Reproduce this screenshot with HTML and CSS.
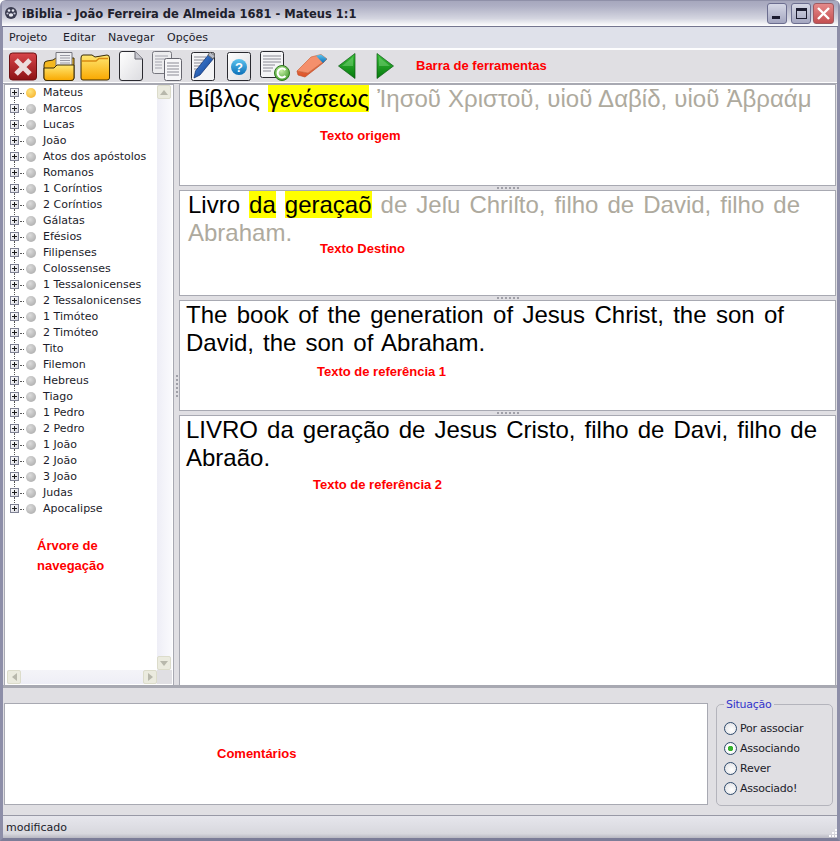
FILE: index.html
```html
<!DOCTYPE html>
<html lang="pt">
<head>
  <meta charset="UTF-8" />
  <title>iBiblia</title>
  <link rel="stylesheet" href="styles.css">
</head>
<body>
  <svg class="defs" width="0" height="0" aria-hidden="true">
    <defs>
      <linearGradient id="gRed" x1="0" y1="0" x2="0" y2="1"><stop offset="0" stop-color="#d8454a"/><stop offset="1" stop-color="#8c1214"/></linearGradient>
      <linearGradient id="gFolder" x1="0" y1="0" x2="0" y2="1"><stop offset="0" stop-color="#ffe873"/><stop offset="1" stop-color="#f9a800"/></linearGradient>
      <linearGradient id="gPage" x1="0" y1="0" x2="1" y2="1"><stop offset="0" stop-color="#ffffff"/><stop offset="1" stop-color="#dcdce0"/></linearGradient>
      <linearGradient id="gBlue" x1="0" y1="0" x2="0" y2="1"><stop offset="0" stop-color="#5ec4ee"/><stop offset="1" stop-color="#0b6fb8"/></linearGradient>
      <linearGradient id="gPen" x1="0" y1="0" x2="1" y2="1"><stop offset="0" stop-color="#4a8be0"/><stop offset="1" stop-color="#0c3a8c"/></linearGradient>
      <linearGradient id="gGreen" x1="0" y1="0" x2="0" y2="1"><stop offset="0" stop-color="#3cc03c"/><stop offset="1" stop-color="#047a0c"/></linearGradient>
      <linearGradient id="gEraser" x1="0" y1="0" x2="0" y2="1"><stop offset="0" stop-color="#f08058"/><stop offset="1" stop-color="#dc5228"/></linearGradient>
      <radialGradient id="gBall" cx="0.45" cy="0.35" r="0.7"><stop offset="0" stop-color="#c8f0a8"/><stop offset="1" stop-color="#3e9a28"/></radialGradient>
    </defs>
  </svg>

  <div class="window">
    <header class="titlebar">
      <svg class="app-icon" width="14" height="14" viewBox="0 0 14 14">
        <circle cx="7" cy="7" r="6" fill="#3a3c50"/>
        <circle cx="5" cy="4.5" r="1.3" fill="#e8e8f0"/>
        <circle cx="9" cy="4.5" r="1.3" fill="#e8e8f0"/>
        <circle cx="3.5" cy="7.5" r="1.1" fill="#c8c8d8"/>
        <circle cx="10.5" cy="7.5" r="1.1" fill="#c8c8d8"/>
        <ellipse cx="7" cy="9" rx="2.2" ry="1.8" fill="#e8e8f0"/>
      </svg>
      <span class="title">iBiblia - João Ferreira de Almeida 1681 - Mateus 1:1</span>
      <div class="win-buttons">
        <span class="win-btn"><span class="glyph-min"></span></span>
        <span class="win-btn"><span class="glyph-max"></span></span>
        <span class="win-btn win-close">
          <svg width="15" height="15" viewBox="0 0 15 15"><path d="M2 2 L13 13 M13 2 L2 13" stroke="#fff" stroke-width="2.4"/></svg>
        </span>
      </div>
    </header>

    <nav class="menubar">
      <span>Projeto</span>
      <span>Editar</span>
      <span>Navegar</span>
      <span>Opções</span>
    </nav>

    <div class="toolbar">
      <svg class="tool" width="28" height="29" viewBox="0 0 28 29">
        <rect x="0.5" y="1" width="27" height="27" rx="3" fill="url(#gRed)" stroke="#6d1012"/>
        <path d="M7 8 L21 22 M21 8 L7 22" stroke="#ecdcdc" stroke-width="5"/>
      </svg>
      <svg class="tool gap-6" width="32" height="29" viewBox="0 0 32 29">
        <path d="M1 13 Q1 9 4 9 L10 8 L13 6 L31 6 L31 26 Q31 28.5 28 28.5 L4 28.5 Q1 28.5 1 26 Z" fill="#f4b820" stroke="#3a2c08"/>
        <path d="M13 0.5 L29 0.5 L29 14 L13 14 Z" fill="#eeeef0" stroke="#77777f"/>
        <path d="M17 3.5 H27 M17 6 H27 M17 8.5 H27 M17 11 H27" stroke="#9a9aa4"/>
        <path d="M1 16 L11 16 L14 13 L31 13 L31 26 Q31 28.5 28 28.5 L4 28.5 Q1 28.5 1 26 Z" fill="url(#gFolder)" stroke="#3a2c08"/>
      </svg>
      <svg class="tool gap-5" width="30" height="29" viewBox="0 0 30 29">
        <path d="M1 6 Q1 3 3 3 L12 3 L15 5 L27 3 Q29.5 3 29.5 6 L29.5 26 Q29.5 28 27 28 L3 28 Q1 28 1 26 Z" fill="url(#gFolder)" stroke="#3a2c08"/>
        <path d="M2 9 L16 9 L19 6.5 L28 6.5" stroke="#d98a10" fill="none" stroke-width="1.5"/>
      </svg>
      <svg class="tool gap-9" width="24" height="30" viewBox="0 0 24 30">
        <path d="M3 0.5 L16 0.5 L23.5 8 L23.5 27 Q23.5 29.5 21 29.5 L3 29.5 Q0.5 29.5 0.5 27 L0.5 3 Q0.5 0.5 3 0.5 Z" fill="url(#gPage)" stroke="#2a2a30"/>
        <path d="M16 0.5 L16 8 L23.5 8" fill="#c8c8d0" stroke="#6a6a74"/>
      </svg>
      <svg class="tool gap-9" width="30" height="30" viewBox="0 0 30 30">
        <rect x="0.5" y="0.5" width="19" height="22" rx="2" fill="#ececee" stroke="#77777f"/>
        <path d="M3 5 H16 M3 8 H16 M3 11 H10 M3 14 H10 M3 17 H10" stroke="#a4a4ae"/>
        <rect x="12.5" y="7.5" width="17" height="22" rx="2" fill="#f6f6f8" stroke="#66666f"/>
        <path d="M15 12 H27 M15 15 H27 M15 18 H27 M15 21 H27 M15 24 H27" stroke="#8a8a94"/>
      </svg>
      <svg class="tool gap-9" width="24" height="30" viewBox="0 0 24 30">
        <rect x="0.5" y="1.5" width="23" height="28" rx="2" fill="#f4f4f6" stroke="#2a2a30"/>
        <path d="M3 6 H15 M3 9 H13 M3 12 H11 M3 15 H9 M3 18 H7" stroke="#8a8a94"/>
        <path d="M18 3 L23 7 L9 24 L3 27 L4.5 20 Z" fill="url(#gPen)" stroke="#0a2a6a" stroke-width="0.7"/>
        <path d="M19 1 L24 5 L22 8 L17 4 Z" fill="#b8bcc8" stroke="#666"/>
      </svg>
      <svg class="tool gap-12" width="24" height="29" viewBox="0 0 24 29">
        <rect x="0.5" y="0.5" width="23" height="28" rx="2" fill="url(#gPage)" stroke="#2a2a30"/>
        <circle cx="12" cy="15" r="8" fill="url(#gBlue)"/>
        <text x="12" y="19.5" class="help-mark">?</text>
      </svg>
      <svg class="tool gap-9" width="30" height="30" viewBox="0 0 30 30">
        <rect x="0.5" y="0.5" width="23" height="26" rx="2" fill="#f4f4f6" stroke="#2a2a30"/>
        <path d="M3 5 H21 M3 8 H21 M3 11 H21 M3 14 H15 M3 17 H13 M3 20 H11" stroke="#8a8a94"/>
        <circle cx="22" cy="22" r="7.5" fill="url(#gBall)" stroke="#2e7a1c"/>
        <path d="M25.5 19 A4.5 4.5 0 1 0 25.5 25" fill="none" stroke="#fff" stroke-width="2"/>
      </svg>
      <svg class="tool gap-6" width="32" height="24" viewBox="0 0 32 24">
        <path d="M1 17 L12 19 L31 5 L27 9 L9 23 L2 21 Z" fill="url(#gEraser)" stroke="#c24e26" stroke-width="0.7"/>
        <path d="M1 17 L15 3 L25 0.5 L31 5 L12 19 Z" fill="#f4906c" stroke="#d06a40" stroke-width="0.7"/>
        <path d="M20 1.8 L25 0.5 L31 5 L27 9 L24 6 Z" fill="url(#gBlue)"/>
      </svg>
      <svg class="tool gap-10" width="18" height="26" viewBox="0 0 18 26">
        <path d="M17 0.5 L17 25.5 L0.5 13 Z" fill="url(#gGreen)" stroke="#0b5a12" stroke-width="0.7"/>
        <path d="M15 4 L15 13 L4 13 Z" fill="#7ad27a" opacity="0.5"/>
      </svg>
      <svg class="tool gap-20" width="18" height="26" viewBox="0 0 18 26">
        <path d="M1 0.5 L1 25.5 L17.5 13 Z" fill="url(#gGreen)" stroke="#0b5a12" stroke-width="0.7"/>
        <path d="M3 4 L3 13 L14 13 Z" fill="#7ad27a" opacity="0.5"/>
      </svg>
      <span class="note note-toolbar">Barra de ferramentas</span>
    </div>

    <main class="workspace">
      <aside class="tree-panel">
        <ul class="tree">
          <li class="current"><i class="plus"></i><i class="dot"></i>Mateus</li>
          <li><i class="plus"></i><i class="dot"></i>Marcos</li>
          <li><i class="plus"></i><i class="dot"></i>Lucas</li>
          <li><i class="plus"></i><i class="dot"></i>João</li>
          <li><i class="plus"></i><i class="dot"></i>Atos dos apóstolos</li>
          <li><i class="plus"></i><i class="dot"></i>Romanos</li>
          <li><i class="plus"></i><i class="dot"></i>1 Coríntios</li>
          <li><i class="plus"></i><i class="dot"></i>2 Coríntios</li>
          <li><i class="plus"></i><i class="dot"></i>Gálatas</li>
          <li><i class="plus"></i><i class="dot"></i>Efésios</li>
          <li><i class="plus"></i><i class="dot"></i>Filipenses</li>
          <li><i class="plus"></i><i class="dot"></i>Colossenses</li>
          <li><i class="plus"></i><i class="dot"></i>1 Tessalonicenses</li>
          <li><i class="plus"></i><i class="dot"></i>2 Tessalonicenses</li>
          <li><i class="plus"></i><i class="dot"></i>1 Timóteo</li>
          <li><i class="plus"></i><i class="dot"></i>2 Timóteo</li>
          <li><i class="plus"></i><i class="dot"></i>Tito</li>
          <li><i class="plus"></i><i class="dot"></i>Filemon</li>
          <li><i class="plus"></i><i class="dot"></i>Hebreus</li>
          <li><i class="plus"></i><i class="dot"></i>Tiago</li>
          <li><i class="plus"></i><i class="dot"></i>1 Pedro</li>
          <li><i class="plus"></i><i class="dot"></i>2 Pedro</li>
          <li><i class="plus"></i><i class="dot"></i>1 João</li>
          <li><i class="plus"></i><i class="dot"></i>2 João</li>
          <li><i class="plus"></i><i class="dot"></i>3 João</li>
          <li><i class="plus"></i><i class="dot"></i>Judas</li>
          <li class="last"><i class="plus"></i><i class="dot"></i>Apocalipse</li>
        </ul>
        <div class="vscroll">
          <span class="sb-btn"><i class="arrow-up"></i></span>
          <span class="sb-btn"><i class="arrow-down"></i></span>
        </div>
        <div class="hscroll">
          <span class="sb-btn"><i class="arrow-left"></i></span>
          <span class="sb-btn"><i class="arrow-right"></i></span>
        </div>
        <span class="note note-tree">Árvore de<br>navegação</span>
      </aside>

      <div class="vsplit"><span class="grip-v"></span></div>

      <div class="panes">
        <section class="pane pane-origin">
          <p class="verse verse-origin">Βίβλος <mark>γενέσεως</mark> <span class="dim">Ἰησοῦ Χριστοῦ, υἱοῦ Δαβίδ, υἱοῦ Ἀβραάμ</span></p>
          <span class="note note-origin">Texto origem</span>
        </section>
        <div class="hsplit"><span class="grip-h"></span></div>
        <section class="pane pane-target">
          <p class="verse verse-target">Livro <mark>da</mark> <mark>geraçaõ</mark> <span class="dim">de Jeſu Chriſto, filho de David, filho de</span> <span class="dim">Abraham.</span></p>
          <span class="note note-target">Texto Destino</span>
        </section>
        <div class="hsplit"><span class="grip-h"></span></div>
        <section class="pane pane-ref1">
          <p class="verse verse-ref1">The book of the generation of Jesus Christ, the son of David, the son of Abraham.</p>
          <span class="note note-ref1">Texto de referência 1</span>
        </section>
        <div class="hsplit"><span class="grip-h"></span></div>
        <section class="pane pane-ref2">
          <p class="verse verse-ref2">LIVRO da geração de Jesus Cristo, filho de Davi, filho de Abraão.</p>
          <span class="note note-ref2">Texto de referência 2</span>
        </section>
      </div>
    </main>

    <div class="bottom">
      <div class="comments"><span class="note note-comments">Comentários</span></div>
      <fieldset class="status-group">
        <legend>Situação</legend>
        <label><i class="radio"></i>Por associar</label>
        <label><i class="radio checked"></i>Associando</label>
        <label><i class="radio"></i>Rever</label>
        <label><i class="radio"></i>Associado!</label>
      </fieldset>
    </div>

    <footer class="statusbar">
      <span>modificado</span>
      <svg class="size-grip" width="9" height="9" viewBox="0 0 9 9">
        <path d="M7 1h2v2H7zM4 4h2v2H4zM7 4h2v2H7zM1 7h2v2H1zM4 7h2v2H4zM7 7h2v2H7z" fill="#fbfbfd"/>
      </svg>
    </footer>
  </div>
</body>
</html>
```

FILE: styles.css
```css
* { box-sizing: border-box; }
html, body { margin: 0; padding: 0; }
body {
  width: 840px;
  height: 841px;
  overflow: hidden;
  background: #fff;
  font-family: "DejaVu Sans", sans-serif;
  color: #1c1c2a;
}
.defs { position: absolute; }

.window {
  position: relative;
  width: 840px;
  height: 841px;
  display: flex;
  flex-direction: column;
  background: #e0dfe3;
  border: 1px solid #8f90a8;
  border-radius: 6px 6px 0 0;
  border-left: 3px solid #8d8ea8;
  border-right: 3px solid #8d8ea8;
  border-bottom: 3px solid #7c7d98;
}

/* title bar */
.titlebar {
  height: 26px;
  margin: 0 -1px;
  display: flex;
  align-items: center;
  padding-left: 2px;
  background: linear-gradient(#a6a7bd 0, #aeafc4 20%, #d4d5e0 70%, #ffffff 100%);
  border-bottom: 1px solid #74758f;
}
.app-icon { margin-right: 4px; margin-top: -1px; }
.title {
  font-weight: bold;
  font-size: 11.5px;
  margin-top: 1px;
  color: #20202c;
}
.win-buttons {
  margin-left: auto;
  margin-right: 4px;
  margin-top: -1px;
  display: flex;
  gap: 4px;
}
.win-btn {
  width: 20px;
  height: 21px;
  display: flex;
  align-items: center;
  justify-content: center;
  border: 1px solid #6c6e90;
  border-radius: 3px;
  background: linear-gradient(#d6d8e6, #a4a6c0);
}
.win-close {
  width: 21px;
  margin-left: -2px;
  background: linear-gradient(#e58a8a, #c44e50);
  border-color: #a05a60;
}
.glyph-min {
  width: 8px;
  height: 3px;
  margin: 8px 3px 0 0;
  background: #1c1c30;
}
.glyph-max {
  width: 11px;
  height: 11px;
  border: 1px solid #1c1c30;
  border-top-width: 3px;
}

/* menu and tools */
.menubar {
  height: 23px;
  display: grid;
  grid-template-columns: 54px 45px 59px auto;
  align-items: center;
  padding-left: 6px;
  font-size: 11px;
  background: #dfe1ea;
  border-bottom: 2px solid #fdfdfe;
}
.toolbar {
  position: relative;
  height: 33px;
  display: flex;
  align-items: center;
  padding-left: 6px;
  background: #e0dfe3;
  border-bottom: 1px solid #fdfdfe;
}
.tool { flex: none; }
.gap-5 { margin-left: 5px; }
.gap-6 { margin-left: 6px; }
.gap-9 { margin-left: 9px; }
.gap-10 { margin-left: 10px; }
.gap-12 { margin-left: 12px; }
.gap-20 { margin-left: 20px; }
.help-mark {
  font-family: "Liberation Sans", sans-serif;
  font-weight: bold;
  font-size: 13px;
  fill: #fff;
  text-anchor: middle;
}

/* red annotations laid over the screenshot */
.note {
  position: absolute;
  font-family: "Liberation Sans", sans-serif;
  font-weight: bold;
  font-size: 13px;
  line-height: 20px;
  color: #f00;
  white-space: nowrap;
}
.note-toolbar { left: 413px; top: 6px; }
.note-tree { left: 32px; top: 451px; white-space: normal; }
.note-origin { left: 140px; top: 41px; }
.note-target { left: 140px; top: 48px; }
.note-ref1 { left: 137px; top: 61px; }
.note-ref2 { left: 133px; top: 59px; }
.note-comments { left: 212px; top: 40px; }

/* main area */
.workspace {
  flex: none;
  height: 605px;
  display: flex;
  padding: 1px 2px 0 2px;
  background: #e0dfe3;
  border-top: 1px solid #a8a9b2;
  border-bottom: 3px solid #a8a9b2;
}
.tree-panel {
  position: relative;
  width: 169px;
  border: 2px solid #fff;
  border-width: 0 1px 1px 0;
  background: #fff;
  box-shadow: 0 0 0 1px #a8a9b2;
}
.tree {
  list-style: none;
  margin: 0;
  padding: 0;
  font-size: 11px;
}
.tree li {
  position: relative;
  height: 16px;
  line-height: 16px;
  padding-left: 38px;
  white-space: nowrap;
}
.tree .plus {
  position: absolute;
  left: 5px;
  top: 3px;
  width: 9px;
  height: 9px;
  border: 1px solid #7f8294;
  background:
    linear-gradient(#1a1a1a, #1a1a1a) center / 5px 1px no-repeat,
    linear-gradient(#1a1a1a, #1a1a1a) center / 1px 5px no-repeat,
    linear-gradient(135deg, #fff, #d8d8e0);
}
.tree li::before {
  content: "";
  position: absolute;
  left: 9px;
  top: -4px;
  height: 16px;
  border-left: 1px dotted #555;
}
.tree li:first-child::before { display: none; }
.tree li::after {
  content: "";
  position: absolute;
  left: 15px;
  top: 8px;
  width: 4px;
  border-top: 1px dotted #555;
}
.tree .dot {
  position: absolute;
  left: 21px;
  top: 3px;
  width: 10px;
  height: 10px;
  border-radius: 50%;
  background: radial-gradient(circle at 40% 35%, #dcdcdc, #a4a4a4);
}
.tree .current .dot {
  background: radial-gradient(circle at 40% 35%, #ffe680, #f5a81c);
}

.vscroll {
  position: absolute;
  right: 0;
  top: 0;
  bottom: 14px;
  width: 15px;
  display: flex;
  flex-direction: column;
  justify-content: space-between;
  background: linear-gradient(90deg, #eeeef6, #fafafd);
}
.hscroll {
  position: absolute;
  left: 2px;
  right: 15px;
  bottom: 0;
  height: 14px;
  display: flex;
  justify-content: space-between;
  background: linear-gradient(#f4f4f8, #eeeef6);
}
.hscroll::after {
  content: "";
  position: absolute;
  right: -15px;
  top: 0;
  width: 15px;
  height: 14px;
  background: #e0dfe3;
}
.sb-btn {
  width: 14px;
  height: 14px;
  display: flex;
  align-items: center;
  justify-content: center;
  background: #ebebdf;
  border: 1px solid #dcdccb;
  border-radius: 2px;
}
.arrow-up, .arrow-down, .arrow-left, .arrow-right {
  width: 0;
  height: 0;
  border: 4px solid transparent;
}
.arrow-up { border-bottom: 5px solid #b8b8ac; border-top-width: 0; }
.arrow-down { border-top: 5px solid #b8b8ac; border-bottom-width: 0; }
.arrow-left { border-right: 5px solid #b8b8ac; border-left-width: 0; }
.arrow-right { border-left: 5px solid #b8b8ac; border-right-width: 0; }

.vsplit {
  width: 7px;
  display: flex;
  align-items: center;
  justify-content: center;
}
.grip-v {
  width: 2px;
  height: 22px;
  margin-bottom: -2px;
  background: repeating-linear-gradient(#a0a0a8 0 2px, transparent 2px 4px);
}
.panes {
  flex: none;
  width: 655px;
  display: flex;
  flex-direction: column;
}
.pane {
  position: relative;
  background: #fff;
  box-shadow: 0 0 0 1px #a8a9b2;
}
.pane-origin { height: 100px; }
.pane-target { height: 104px; }
.pane-ref1 { height: 109px; }
.pane-ref2 { flex: 1; }
.hsplit {
  height: 6px;
  flex: none;
  display: flex;
  justify-content: center;
  align-items: flex-end;
  padding-bottom: 2px;
}
.grip-h {
  width: 22px;
  height: 2px;
  background: repeating-linear-gradient(90deg, #a0a0a8 0 2px, transparent 2px 4px);
}

.verse {
  margin: 0;
  font-family: "Liberation Sans", sans-serif;
  font-size: 24px;
  line-height: 28px;
  color: #000;
  text-align: justify;
}
.verse-origin { padding-left: 8px; white-space: nowrap; word-spacing: 1.5px; }
.verse-origin .dim { word-spacing: 0.5px; }
.verse-target { padding: 0 35px 0 8px; }
.verse-ref1 { padding: 0 51px 0 6px; word-spacing: 2.4px; }
.verse-ref2 { padding: 0 18px 0 6px; }
.verse mark { background: #ffff00; color: #000; }
.dim { color: #aeaa9e; }

/* bottom area */
.bottom {
  flex: none;
  height: 128px;
  display: flex;
  align-items: flex-end;
  padding: 0 4px 10px 1px;
  border-bottom: 1px solid #9899a6;
}
.comments {
  position: relative;
  width: 704px;
  height: 102px;
  background: #fff;
  border: 1px solid #a8a9b2;
}
.status-group {
  width: 117px;
  height: 108px;
  margin: 0 0 -1px 8px;
  padding: 7px 0 0 7px;
  border: 1px solid #b4b4bc;
  border-radius: 5px;
  font-size: 11px;
  letter-spacing: -0.25px;
}
.status-group legend {
  padding: 0 2px;
  margin-left: 0;
  color: #3434cc;
  line-height: 13px;
}
.status-group label {
  display: flex;
  align-items: center;
  height: 20px;
  gap: 3px;
}
.radio {
  width: 13px;
  height: 13px;
  border-radius: 50%;
  border: 1px solid #2e4a6c;
  background: radial-gradient(circle at 60% 60%, #fff, #dcdce0);
}
.radio.checked {
  background: radial-gradient(circle, #35b32e 0 2.5px, #fff 3px, #e8e8ec);
}

.statusbar {
  position: relative;
  flex: 1;
  display: flex;
  align-items: center;
  padding-left: 3px;
  font-size: 11px;
  background: linear-gradient(#e6e6ec, #d8d8de 80%, #b8b8c2);
}
.size-grip {
  position: absolute;
  right: 0;
  bottom: 1px;
}
```
